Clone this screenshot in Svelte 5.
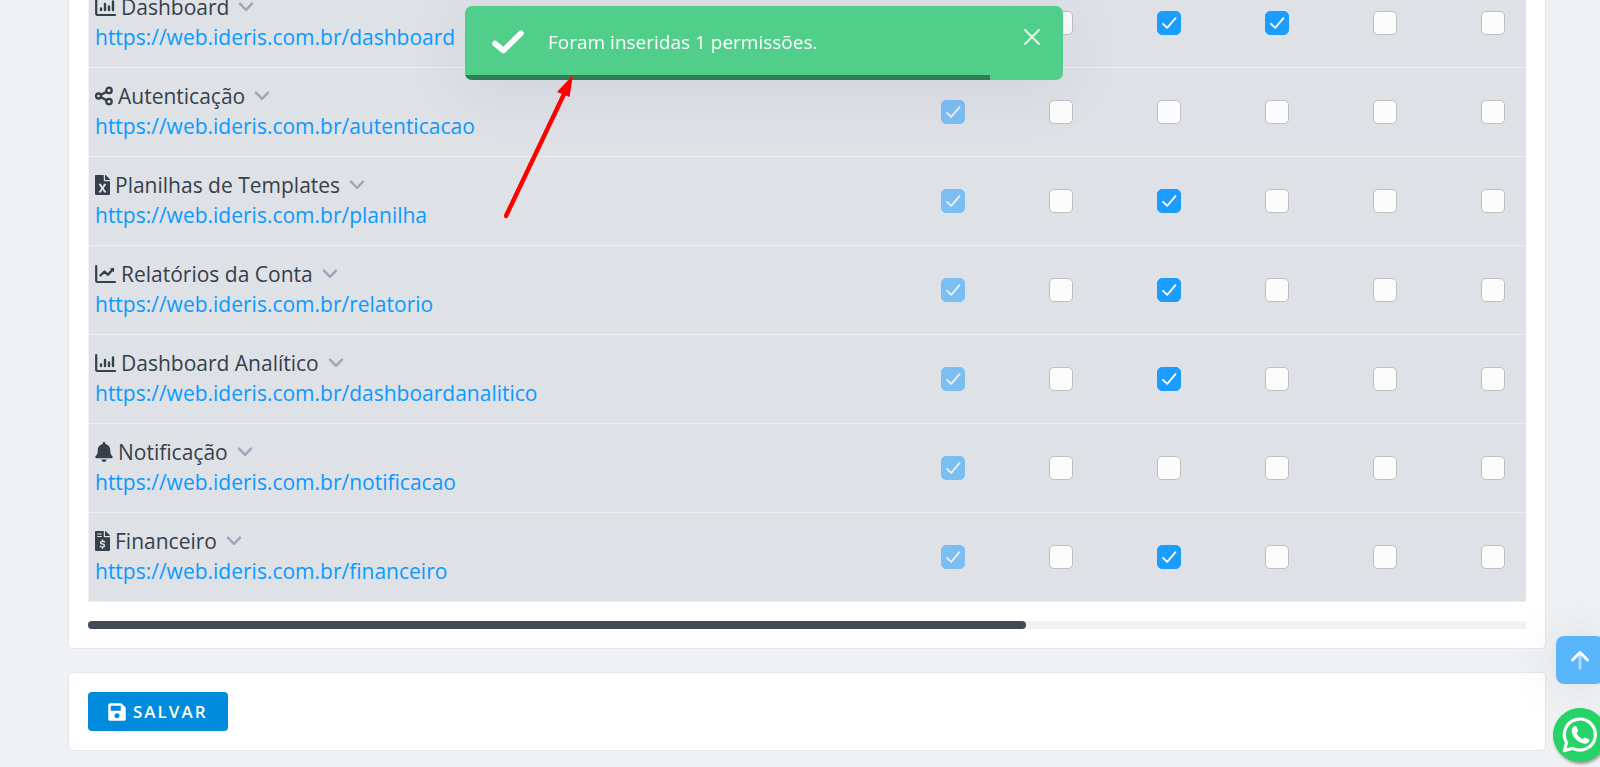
<script>
  const base = 'https://web.ideris.com.br/';
  const columns = ['Acesso', 'Inserir', 'Consultar', 'Alterar', 'Excluir', 'Exportar'];

  let rows = $state([
    { name: 'Dashboard', path: 'dashboard', icon: 'bars', checks: [true, false, true, true, false, false] },
    { name: 'Autenticação', path: 'autenticacao', icon: 'share', checks: [true, false, false, false, false, false] },
    { name: 'Planilhas de Templates', path: 'planilha', icon: 'excel', checks: [true, false, true, false, false, false] },
    { name: 'Relatórios da Conta', path: 'relatorio', icon: 'line', checks: [true, false, true, false, false, false] },
    { name: 'Dashboard Analítico', path: 'dashboardanalitico', icon: 'bars', checks: [true, false, true, false, false, false] },
    { name: 'Notificação', path: 'notificacao', icon: 'bell', checks: [true, false, false, false, false, false] },
    { name: 'Financeiro', path: 'financeiro', icon: 'invoice', checks: [true, false, true, false, false, false] }
  ]);
  let toastOpen = $state(true);
</script>

{#snippet icon(kind)}
  {#if kind === 'bars'}
    <svg class="icon" width="21" height="20" viewBox="0 0 21 20" fill="none" stroke="currentColor" stroke-linecap="round" aria-hidden="true">
      <path d="M1.2 2V16.6Q1.2 18 2.6 18H20" stroke-width="2.2" />
      <path d="M6 11.500V13M10 7V13M14 9.500V13M18 4.500V13" stroke-width="2.4" />
    </svg>
  {:else if kind === 'line'}
    <svg class="icon" width="21" height="20" viewBox="0 0 21 20" fill="none" stroke="currentColor" stroke-linecap="round" stroke-linejoin="round" aria-hidden="true">
      <path d="M1.2 2V16.6Q1.2 18 2.6 18H20" stroke-width="2.2" />
      <path d="M5.5 11.5L9.5 7.5L13 10.8L18 5" stroke-width="2.4" />
      <path d="M14.8 4.2H19V8.4Z" fill="currentColor" stroke="none" />
    </svg>
  {:else if kind === 'share'}
    <svg class="icon" width="18" height="20" viewBox="0 0 18 20" fill="none" stroke="currentColor" stroke-width="2.3" aria-hidden="true">
      <circle cx="3.6" cy="10" r="2.5" />
      <circle cx="14" cy="4.4" r="2.7" />
      <circle cx="14" cy="15.6" r="2.7" />
      <path d="M6 8.8L11.6 5.7M6 11.2L11.6 14.3" />
    </svg>
  {:else if kind === 'excel'}
    <svg class="icon" width="15" height="20" viewBox="0 0 384 512" fill="currentColor" aria-hidden="true">
      <path d="M224 136V0H24C10.7 0 0 10.7 0 24v464c0 13.3 10.7 24 24 24h336c13.3 0 24-10.7 24-24V160H248c-13.2 0-24-10.8-24-24zm60.1 106.5L224 336l60.1 93.5c5.1 8-.6 18.5-10.1 18.5h-34.9c-4.4 0-8.5-2.4-10.6-6.3C208.9 405.5 192 373 192 373c-6.4 14.8-10 20-36.6 68.8-2.1 3.9-6.1 6.3-10.5 6.3H110c-9.5 0-15.2-10.5-10.1-18.5l60.3-93.5-60.3-93.5c-5.2-8 .6-18.5 10.1-18.5h34.8c4.4 0 8.5 2.4 10.6 6.3 26.1 48.8 20 33.6 36.6 68.5 0 0 6.1-11.7 36.6-68.5 2.1-3.9 6.2-6.3 10.6-6.3H274c9.5-.1 15.2 10.4 10.1 18.4zM384 121.9v6.1H256V0h6.1c6.4 0 12.5 2.5 17 7l97.9 98c4.5 4.5 7 10.6 7 16.9z" />
    </svg>
  {:else if kind === 'bell'}
    <svg class="icon" width="18" height="20" viewBox="0 0 448 512" fill="currentColor" aria-hidden="true">
      <path d="M224 512c35.32 0 63.97-28.65 63.97-64H160.03c0 35.35 28.65 64 63.97 64zm215.39-149.71c-19.32-20.76-55.47-51.99-55.47-154.29 0-77.7-54.48-139.9-127.94-155.16V32c0-17.67-14.32-32-31.98-32s-31.98 14.33-31.98 32v20.84C118.56 68.1 64.08 130.3 64.08 208c0 102.3-36.15 133.53-55.47 154.29-6 6.45-8.66 14.16-8.61 21.71.11 16.4 12.98 32 32.1 32h383.8c19.12 0 32-15.6 32.1-32 .05-7.55-2.61-15.27-8.61-21.71z" />
    </svg>
  {:else}
    <svg class="icon" width="15" height="20" viewBox="0 0 15 20" aria-hidden="true">
      <path fill="currentColor" d="M1 0H8.8V5.3Q8.8 6.2 9.7 6.2H15V19Q15 20 14 20H1Q0 20 0 19V1Q0 0 1 0ZM10 0.1Q10.6 0.1 11 .5L14.6 4Q15 4.5 15 5H10Z" />
      <g fill="none" stroke="#dee1e6" stroke-linecap="round">
        <path stroke-width="1.1" d="M2.7 3H6.3M2.7 5.5H6.3" />
        <path stroke-width="1.4" d="M9.6 10.9Q8.9 10.2 7.5 10.2Q5.6 10.2 5.6 11.5Q5.6 12.6 7.5 13Q9.5 13.4 9.5 14.7Q9.5 16 7.5 16Q6.1 16 5.3 15.2M7.5 9V10.2M7.5 16V17.2" />
      </g>
    </svg>
  {/if}
{/snippet}

<main>
  <section class="card">
    <div class="scroller">
      <table>
        <tbody>
          {#each rows as row}
            <tr>
              <th scope="row">
                <div class="title">
                  {@render icon(row.icon)}
                  <span>{row.name}</span>
                  <button class="toggle" type="button" aria-label="Expandir {row.name}">
                    <svg width="16" height="10" viewBox="0 0 16 10" fill="none" stroke="currentColor" stroke-width="2.4" stroke-linecap="round" stroke-linejoin="round" aria-hidden="true"><path d="M2 1.6L8 7.8L14 1.6" /></svg>
                  </button>
                </div>
                <a href={base + row.path}>{base}{row.path}</a>
              </th>
              {#each columns as column, i}
                <td>
                  <input type="checkbox" bind:checked={row.checks[i]} disabled={i === 0} aria-label="{column}: {row.name}" />
                </td>
              {/each}
            </tr>
          {/each}
        </tbody>
      </table>
    </div>
    <div class="track"><div class="thumb"></div></div>
  </section>

  <section class="card">
    <button class="save" type="button">
      <svg width="18" height="20" viewBox="0 0 448 512" fill="currentColor" aria-hidden="true">
        <path d="M433.941 129.941l-83.882-83.882A48 48 0 0 0 316.118 32H48C21.49 32 0 53.49 0 80v352c0 26.51 21.49 48 48 48h352c26.51 0 48-21.49 48-48V163.882a48 48 0 0 0-14.059-33.941zM224 416c-35.346 0-64-28.654-64-64 0-35.346 28.654-64 64-64s64 28.654 64 64c0 35.346-28.654 64-64 64zm96-304.52V212c0 6.627-5.373 12-12 12H76c-6.627 0-12-5.373-12-12V108c0-6.627 5.373-12 12-12h228.52c3.183 0 6.235 1.264 8.485 3.515l3.48 3.48A11.996 11.996 0 0 1 320 111.48z" />
      </svg>
      <span>SALVAR</span>
    </button>
  </section>
</main>

{#if toastOpen}
  <div class="toast" role="status">
    <svg width="34" height="26" viewBox="0 0 34 26" fill="none" stroke="#fff" stroke-width="5.6" stroke-linecap="round" stroke-linejoin="round" aria-hidden="true"><path d="M4 14.5L12.4 21.5L30 4.2" /></svg>
    <p>Foram inseridas 1 permissões.</p>
    <button class="close" type="button" aria-label="Fechar" onclick={() => (toastOpen = false)}>
      <svg width="18" height="18" viewBox="0 0 18 18" fill="none" stroke="currentColor" stroke-width="1.8" stroke-linecap="round" aria-hidden="true"><path d="M2 2L16 16M16 2L2 16" /></svg>
    </button>
    <div class="progress"></div>
  </div>
{/if}

<svg class="pointer" width="80" height="148" viewBox="0 0 80 148" aria-hidden="true">
  <path d="M8 142L67 18" stroke="#f00" stroke-width="4.4" stroke-linecap="round" />
  <path d="M75 1L59 18L71.500 23Z" fill="#f00" />
</svg>

<button class="top" type="button" aria-label="Voltar ao topo">
  <svg width="24" height="24" viewBox="0 0 24 24" fill="none" stroke="#fff" stroke-width="3" stroke-linecap="round" stroke-linejoin="round" aria-hidden="true">
    <path d="M12 6V20" opacity="0.5" />
    <path d="M4.500 12L12 4.500L19.500 12" />
  </svg>
</button>

<a class="whatsapp" href="https://web.whatsapp.com/" aria-label="WhatsApp">
  <svg width="54" height="54" viewBox="0 0 54 54" aria-hidden="true">
    <path fill="none" stroke="#fff" stroke-width="3.200" stroke-linejoin="round" d="M11.300 42.600L13.600 34.600A15.500 15.500 0 1 1 19.700 40.300Z" />
    <path fill="#fff" d="M18.700 23.200C18.500 20.400 19.900 18.700 21.400 18.200C22.500 17.900 23.300 18 23.700 19L25 22.300C25.400 23.500 24.200 24.300 23.500 25.200C24.700 27.800 26.900 29.900 29.700 31.100C30.500 30.300 31.300 29.200 32.400 29.700L35.600 31.200C36.500 31.700 36.600 32.300 36.200 33.300C35.500 35.200 33.500 36.100 31.300 35.700C25 34.500 19.200 29.300 18.700 23.200Z" />
  </svg>
</a>

<style>
  :global(body) {
    margin: 0;
    overflow: hidden;
    background: #f0f1f3;
    font-family: 'Open Sans', 'Noto Sans', sans-serif;
    color: #36404b;
  }

  main {
    display: flex;
    flex-direction: column;
    gap: 23px;
    margin-top: -21px;
    padding: 0 54px 16px 68px;
  }

  .card {
    padding: 19px;
    background: #fff;
    border: 1px solid #e3e6ef;
    border-radius: 5px;
  }

  .card:first-child {
    padding-top: 0;
    border-top: 0;
  }

  .scroller {
    overflow: hidden;
    border-left: 1px solid #f1f2f4;
  }

  table {
    width: calc(100% + 21px);
    table-layout: fixed;
    border-collapse: collapse;
    background: #dee1e6;
  }

  tr {
    border-bottom: 1px solid #eceef1;
  }

  th {
    padding: 13px 6px 15px;
    text-align: left;
    font-weight: 400;
    font-size: 21px;
    line-height: 30px;
    white-space: nowrap;
  }

  td {
    width: 108px;
    padding: 0;
    text-align: center;
    vertical-align: middle;
  }

  .title {
    display: flex;
    align-items: center;
    gap: 5px;
    height: 30px;
  }

  .toggle {
    display: flex;
    margin-left: 4px;
    padding: 0;
    border: 0;
    background: none;
    color: #a0a6b8;
    cursor: pointer;
  }

  th a {
    display: block;
    color: #0c99ff;
    text-decoration: none;
  }

  input {
    appearance: none;
    display: block;
    width: 24px;
    height: 24px;
    margin: 0 auto;
    background: #fcfcfc;
    border: 1px solid #bfbfbf;
    border-radius: 5px;
  }

  input:checked {
    border-color: #1a9dff;
    background: #1a9dff url("data:image/svg+xml,%3Csvg xmlns='http://www.w3.org/2000/svg' viewBox='0 0 22 22' fill='none' stroke='%23fff' stroke-width='1.8' stroke-linecap='round' stroke-linejoin='round'%3E%3Cpath d='M5 11.800L9.200 15.800L17.500 6.200'/%3E%3C/svg%3E") center / 22px no-repeat;
  }

  input:disabled {
    opacity: 0.5;
  }

  .track {
    height: 8px;
    margin-top: 19px;
    background: #f2f2f2;
  }

  .thumb {
    width: 65.2%;
    height: 100%;
    background: #414b56;
    border-radius: 4px;
  }

  .save {
    display: flex;
    align-items: center;
    gap: 7px;
    height: 39px;
    padding: 0 20px;
    border: 0;
    border-radius: 4px;
    background: #008bdc;
    color: #fff;
    font-family: inherit;
    font-weight: 600;
    font-size: 17px;
    letter-spacing: 2px;
    cursor: pointer;
  }

  .toast {
    position: fixed;
    top: 6px;
    left: 465px;
    display: flex;
    align-items: center;
    gap: 23px;
    box-sizing: border-box;
    width: 598px;
    height: 74px;
    padding: 0 22px 2px 26px;
    overflow: hidden;
    border-radius: 7px;
    background: #51cf8a;
    color: #fff;
    box-shadow: 0 8px 60px rgba(100, 105, 150, 0.12);
  }

  .toast p {
    flex: 1;
    margin: 0;
    font-size: 19px;
    line-height: 28px;
  }

  .close {
    display: flex;
    align-self: flex-start;
    margin-top: 22px;
    padding: 0;
    border: 0;
    background: none;
    color: #e6f9ee;
    cursor: pointer;
  }

  .progress {
    position: absolute;
    bottom: 0;
    left: 0;
    width: 525px;
    height: 5px;
    background: #2e7d54;
  }

  .pointer {
    position: absolute;
    top: 74px;
    left: 498px;
    pointer-events: none;
  }

  .top {
    position: fixed;
    right: -4px;
    bottom: 83px;
    display: flex;
    align-items: center;
    justify-content: center;
    width: 48px;
    height: 48px;
    padding: 0;
    border: 0;
    border-radius: 8px;
    background: #5ab6fb;
    box-shadow: 0 0 50px rgba(90, 100, 110, 0.14);
    cursor: pointer;
  }

  .whatsapp {
    position: fixed;
    right: -7px;
    bottom: 5px;
    display: flex;
    border-radius: 50%;
    background: #25d366;
    box-shadow: 1px 2px 3px #999;
  }
</style>
